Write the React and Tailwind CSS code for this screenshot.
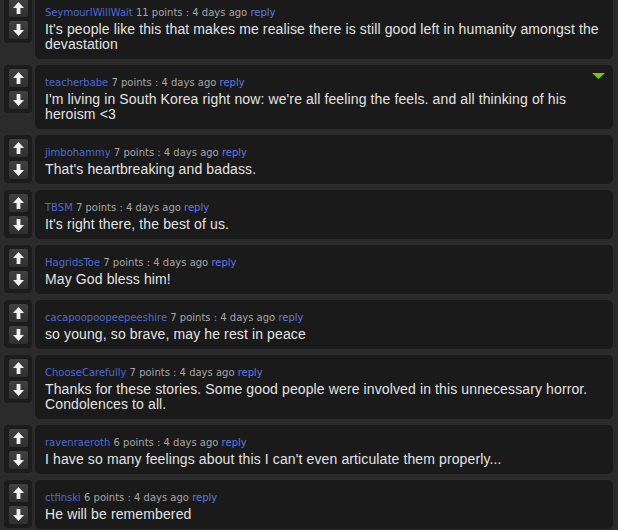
const comments = [
  {
    user: 'SeymourIWillWait',
    points: 11,
    body: "It's people like this that makes me realise there is still good left in humanity amongst the devastation",
  },
  {
    user: 'teacherbabe',
    points: 7,
    body: "I'm living in South Korea right now: we're all feeling the feels. and all thinking of his heroism <3",
    collapse: true,
  },
  { user: 'jimbohammy', points: 7, body: "That's heartbreaking and badass." },
  { user: 'TBSM', points: 7, body: "It's right there, the best of us." },
  { user: 'HagridsToe', points: 7, body: 'May God bless him!' },
  { user: 'cacapoopoopeepeeshire', points: 7, body: 'so young, so brave, may he rest in peace' },
  {
    user: 'ChooseCarefully',
    points: 7,
    body: 'Thanks for these stories. Some good people were involved in this unnecessary horror. Condolences to all.',
  },
  { user: 'ravenraeroth', points: 6, body: "I have so many feelings about this I can't even articulate them properly..." },
  { user: 'ctfinski', points: 6, body: 'He will be remembered' },
]

function Arrow({ down }) {
  return (
    <svg width="11" height="12" viewBox="0 0 11 12" className={down ? 'rotate-180' : ''}>
      <path d="M5.5 0 L11 6 L7.4 6 L7.4 12 L3.6 12 L3.6 6 L0 6 Z" fill="#f2f2f2" />
    </svg>
  )
}

function VoteBox() {
  return (
    <div className="flex h-[48px] w-[28px] shrink-0 flex-col items-center gap-[4px] rounded-[4px] bg-[#1c1c1c] pt-[4px]">
      <button className="flex h-[18px] w-[19px] items-center justify-center rounded-[2px] bg-[linear-gradient(#414141,#2f2f2f)]">
        <Arrow />
      </button>
      <button className="flex h-[18px] w-[19px] items-center justify-center rounded-[2px] bg-[linear-gradient(#414141,#2f2f2f)]">
        <Arrow down />
      </button>
    </div>
  )
}

function Comment({ user, points, body, collapse }) {
  return (
    <div className="flex gap-[3px] pl-[4px] pr-[5px]">
      <VoteBox />
      <div className="relative flex-1 rounded-[5px] bg-[#1a1a1a] pb-[7px] pl-[10px] pr-[10px] pt-[11px]">
        {collapse && (
          <svg width="13" height="6" viewBox="0 0 13 6" className="absolute right-[8px] top-[8px]">
            <path d="M0 0 L13 0 L6.5 6 Z" fill="#7cc40f" />
          </svg>
        )}
        <div className="font-['DejaVu_Sans',sans-serif] text-[10px] leading-[14px] text-[#a6a6a6]">
          <a className="text-[#4a69d6]">{user}</a> {points} points : 4 days ago{' '}
          <a className="text-[#5a7ae4]">reply</a>
        </div>
        <p className="mt-[2px] font-['Liberation_Sans',Arial,sans-serif] text-[14px] leading-[15px] tracking-[0.12px] text-[#e2e2e2]">
          {body}
        </p>
      </div>
    </div>
  )
}

export default function App() {
  return (
    <div className="h-[530px] w-[618px] overflow-hidden bg-[#2b2b2b]">
      <div className="-mt-[5px] flex flex-col gap-[6px]">
        {comments.map((c) => (
          <Comment key={c.user} {...c} />
        ))}
      </div>
    </div>
  )
}
